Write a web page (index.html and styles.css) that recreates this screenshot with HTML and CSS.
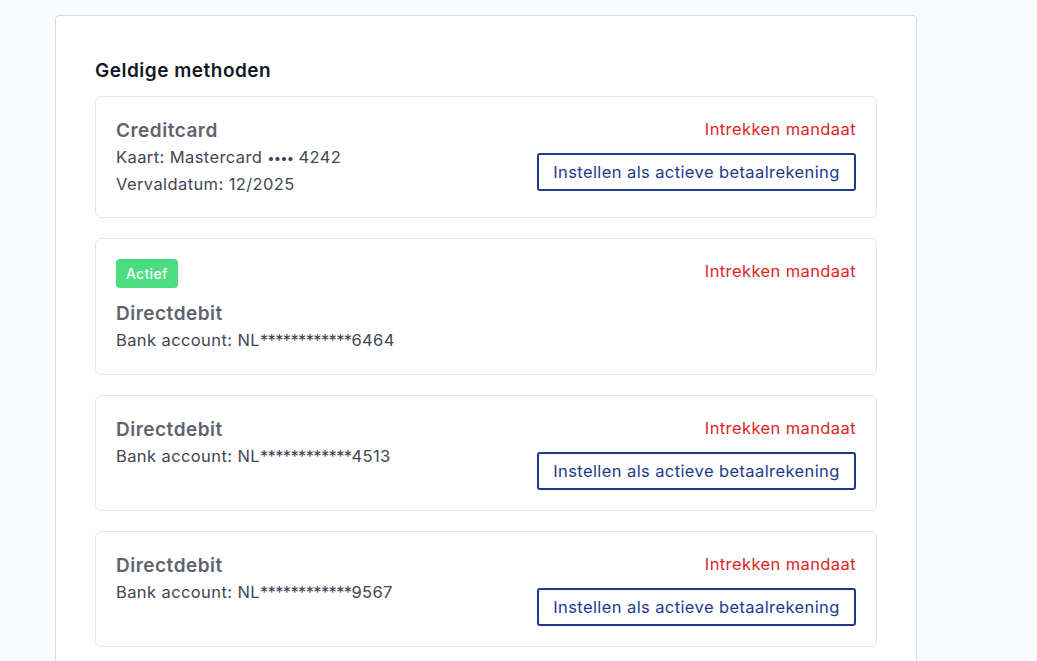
FILE: index.html
```html
<!DOCTYPE html>
<html lang="nl">
<head>
<meta charset="utf-8">
<title>Betaalmethoden</title>
<link rel="stylesheet" href="styles.css">
</head>
<body>
<div class="page">
  <section class="panel">
    <h2 class="panel-title">Geldige methoden</h2>
    <div class="methods">
      <div class="method">
        <div class="method-info">
          <div class="method-name">Creditcard</div>
          <div class="method-line">Kaart: Mastercard <span class="dots">••••</span> 4242</div>
          <div class="method-line">Vervaldatum: 12/2025</div>
        </div>
        <div class="method-actions">
          <a class="revoke" href="#">Intrekken mandaat</a>
          <button class="set-active">Instellen als actieve betaalrekening</button>
        </div>
      </div>
      <div class="method">
        <div class="method-info">
          <span class="badge">Actief</span>
          <div class="method-name">Directdebit</div>
          <div class="method-line">Bank account: NL<span class="mask">************</span>6464</div>
        </div>
        <div class="method-actions">
          <a class="revoke" href="#">Intrekken mandaat</a>
        </div>
      </div>
      <div class="method">
        <div class="method-info">
          <div class="method-name">Directdebit</div>
          <div class="method-line">Bank account: NL<span class="mask">************</span>4513</div>
        </div>
        <div class="method-actions">
          <a class="revoke" href="#">Intrekken mandaat</a>
          <button class="set-active">Instellen als actieve betaalrekening</button>
        </div>
      </div>
      <div class="method">
        <div class="method-info">
          <div class="method-name">Directdebit</div>
          <div class="method-line">Bank account: NL<span class="mask">************</span>9567</div>
        </div>
        <div class="method-actions">
          <a class="revoke" href="#">Intrekken mandaat</a>
          <button class="set-active">Instellen als actieve betaalrekening</button>
        </div>
      </div>
    </div>
  </section>
</div>
</body>
</html>
```
FILE: styles.css
```css
* { box-sizing: border-box; }
html, body { margin: 0; padding: 0; }
body {
  background: #f8fafc;
  font-family: Inter, "Open Sans", Arial, sans-serif;
  color: #374151;
  height: 661px;
  overflow: hidden;
}
.page {
  padding: 15px 0 0 55px;
}
.panel {
  width: 862px;
  background: #ffffff;
  border: 1px solid #cfdde5;
  border-radius: 4px;
  padding: 40px 39px 40px 39px;
  min-height: 700px;
}
.panel-title {
  margin: 0 0 10px 0;
  font-size: 19px;
  line-height: 30px;
  letter-spacing: 0.5px;
  font-weight: 600;
  color: #111827;
}
.methods {
  display: flex;
  flex-direction: column;
  gap: 20px;
}
.method {
  display: flex;
  justify-content: space-between;
  align-items: flex-start;
  border: 1px solid #e5e7eb;
  border-radius: 6px;
  padding: 20px;
}
.method-info {
  display: flex;
  flex-direction: column;
  align-items: flex-start;
}
.badge {
  display: inline-block;
  background: #4ade80;
  color: #ffffff;
  font-size: 14px;
  font-weight: 500;
  letter-spacing: 0.3px;
  line-height: 29px;
  padding: 0 10px;
  border-radius: 4px;
  margin-bottom: 12px;
}
.method-name {
  font-size: 19px;
  line-height: 28px;
  letter-spacing: 0.5px;
  font-weight: 600;
  color: #5f6370;
}
.method-line {
  font-size: 16.5px;
  line-height: 25.5px;
  letter-spacing: 0.4px;
  color: #3f4654;
}
.dots {
  font-size: 13px;
  letter-spacing: -0.8px;
}
.mask {
  letter-spacing: -0.65px;
}
.method-actions {
  display: flex;
  flex-direction: column;
  align-items: flex-end;
  gap: 12px;
}
.revoke {
  color: #dc2626;
  text-decoration: none;
  font-size: 16.5px;
  letter-spacing: 0.4px;
  line-height: 24px;
}
.set-active {
  font-family: inherit;
  font-size: 16.5px;
  letter-spacing: 0.4px;
  line-height: 20px;
  color: #1e3a8a;
  background: #ffffff;
  border: 2px solid #1e3a8a;
  border-radius: 3px;
  padding: 7px 10px;
  width: 319px;
  height: 38px;
  cursor: pointer;
}
```
